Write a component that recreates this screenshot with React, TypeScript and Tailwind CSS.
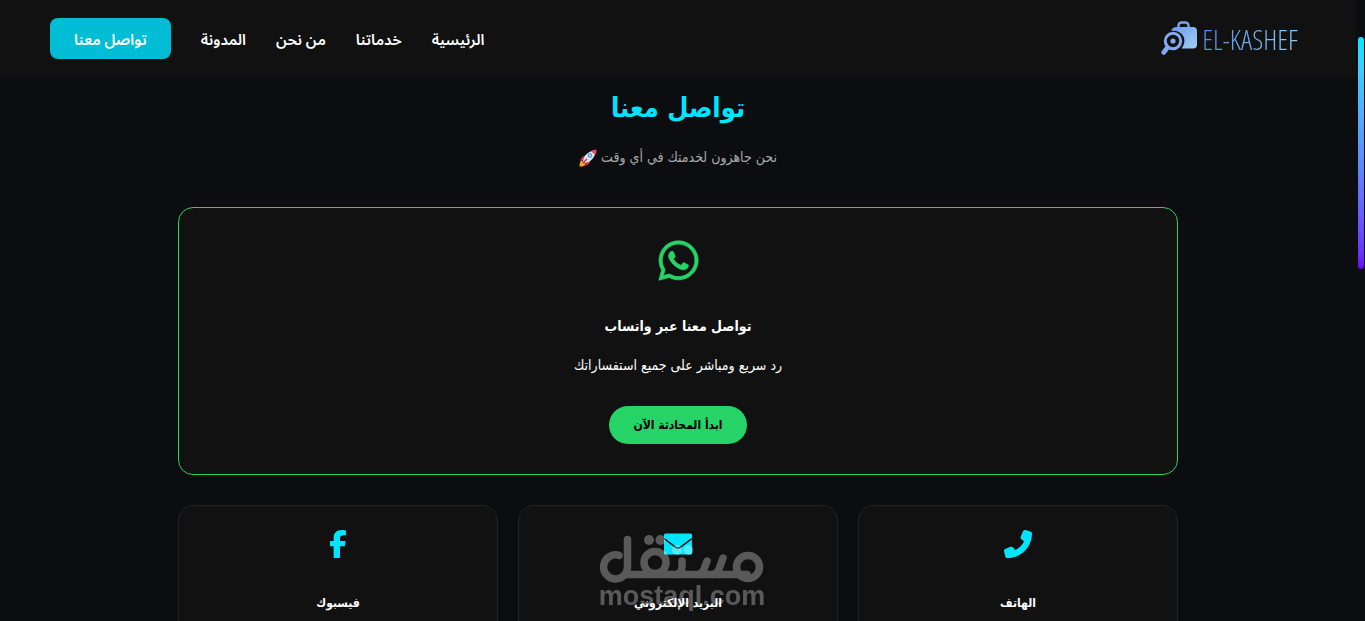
import React from "react";
import { FaWhatsapp } from "react-icons/fa";
import { FaFacebookF, FaPhone } from "react-icons/fa6";

const navLinks = ["الرئيسية", "خدماتنا", "من نحن", "المدونة"];

function Envelope() {
  return (
    <svg width="28" height="28" viewBox="0 0 28 28" fill="none" aria-hidden="true">
      <rect y="3.500" width="28" height="21" rx="1.500" fill="currentColor" />
      <path d="m0 8.500 11.500 8.600a4 4 0 0 0 5 0L28 8.500" stroke="#111111" strokeWidth="1.500" />
    </svg>
  );
}

const channels = [
  { title: "الهاتف", icon: <FaPhone size={28} className="-scale-x-100" />, marked: false },
  { title: "البريد الإلكتروني", icon: <Envelope />, marked: true },
  { title: "فيسبوك", icon: <FaFacebookF size={28} />, marked: false },
];

function LogoMark() {
  return (
    <svg width="37" height="35" viewBox="0 0 37 35" fill="none" aria-hidden="true">
      <defs>
        <linearGradient id="bag" x1="10" y1="2" x2="36" y2="28" gradientUnits="userSpaceOnUse">
          <stop stopColor="#6a93e6" />
          <stop offset="1" stopColor="#9fd0f8" />
        </linearGradient>
      </defs>
      <path d="M17.500 7V4.500a3 3 0 0 1 3-3h4a3 3 0 0 1 3 3V7" stroke="#7aa0ea" strokeWidth="2.400" />
      <path d="M10 9.500C11 7 13 6 16 6h16a4 4 0 0 1 4 4v13.500a4 4 0 0 1-4 4H20.500C26 21 24.500 9.500 10 9.500Z" fill="url(#bag)" />
      <circle cx="12" cy="20" r="7.700" stroke="#86a8ee" strokeWidth="3" />
      <circle cx="12" cy="20" r="2.600" fill="#86a8ee" />
      <path d="M6.500 26.500 2.700 31.500" stroke="#86a8ee" strokeWidth="4.600" strokeLinecap="round" />
    </svg>
  );
}

function Rocket() {
  return (
    <svg width="18" height="18" viewBox="0 0 36 36" role="img" aria-label="🚀" className="inline-block align-middle">
      <path d="M1 35c0-7 1-11 5-12l7 7c-1 4-5 5-12 5Z" fill="#f4a21f" />
      <path d="M2 25c2-8 7-13 14-12l7 7c1 7-4 12-12 14l2-7-5-5Z" fill="#c8304f" />
      <path d="M8 24C9 13 20 3 34 2c-1 14-11 25-22 26Z" fill="#dfe3ea" />
      <path d="M24 4c3-1.500 7-2.500 11-3 0 4-1 8-3 11Z" fill="#f0476b" />
      <circle cx="22" cy="13" r="4.500" fill="#4d8fd6" />
      <circle cx="22" cy="13" r="2.500" fill="#a5d4f5" />
      <path d="m8 28 8-8" stroke="#c8304f" strokeWidth="3" />
    </svg>
  );
}

function Watermark() {
  return (
    <div className="pointer-events-none absolute inset-x-0 top-7 flex flex-col items-center pl-2 opacity-30" dir="ltr">
      <svg width="164" height="50" viewBox="0 0 164 50" fill="none" stroke="#fff" strokeWidth="7.500" strokeLinecap="round" strokeLinejoin="round" aria-hidden="true">
        <path d="M19 21.400A12 12 0 1 0 27.500 34V5.500M26 40.500H147" />
        <circle cx="148" cy="33" r="11.500" />
        <circle cx="55" cy="28.500" r="11" />
        <path d="M82 27v5c0 5-2 8-6 8.500M107 27l-3 8c-1 3-3 5-6 5.500M123 24l-4 11c-1 3-3 5-6 5.500" />
        <g fill="#fff" stroke="none">
          <circle cx="49" cy="6" r="5" />
          <circle cx="60.500" cy="6" r="5" />
          <circle cx="77" cy="16" r="5" />
          <circle cx="88.500" cy="16" r="5" />
        </g>
      </svg>
      <span className="font-['Liberation_Sans',sans-serif] text-[27px] leading-6 font-bold text-white">mostaql.com</span>
    </div>
  );
}

export default function App() {
  return (
    <div dir="rtl" className="relative h-screen overflow-hidden bg-[#0b0d11] pr-[9px] font-['DejaVu_Sans_Condensed','DejaVu_Sans',sans-serif] text-white">
      <header className="flex h-[78px] items-center justify-between bg-[#111111] pr-[58px] pb-px pl-[50px]">
        <a href="#home" dir="ltr" className="flex items-center gap-1">
          <LogoMark />
          <span className="bg-linear-to-r from-[#5b8ce6] to-[#8ccbf5] bg-clip-text font-['Noto_Sans_ExtraCondensed_Light','Noto_Sans_ExtraCondensed','Open_Sans_Condensed_Light','Open_Sans_Condensed','DejaVu_Sans_Condensed',sans-serif] text-[28px] leading-8 font-light text-transparent">
            EL-KASHEF
          </span>
        </a>
        <nav className="flex items-center gap-[30px] font-['Noto_Sans_Arabic','DejaVu_Sans',sans-serif] text-[15px] font-semibold">
          {navLinks.map((label) => (
            <a key={label} href="#section" className="pt-[3px]">{label}</a>
          ))}
          <a href="#contact" className="flex h-[41px] items-center rounded-lg bg-[#00bcd4] px-6 pt-[3px]">
            تواصل معنا
          </a>
        </nav>
      </header>

      <main className="mx-auto max-w-[1000px] text-center">
        <h1 className="pt-1.5 text-[27px] leading-[48px] font-bold text-[#00e5ff]">تواصل معنا</h1>
        <p className="mt-[13px] text-sm leading-6 text-[#aaaaaa]">
          نحن جاهزون لخدمتك في أي وقت <Rocket />
        </p>

        <section className="mt-[38px] flex h-[268px] flex-col items-center rounded-[15px] border border-[#25d366] bg-[#111111] pt-[30px]">
          <FaWhatsapp size={45} stroke="currentColor" strokeWidth={8} className="text-[#25d366]" />
          <h2 className="mt-[31px] text-sm leading-6 font-bold">تواصل معنا عبر واتساب</h2>
          <p className="mt-[15px] text-sm leading-6">رد سريع ومباشر على جميع استفساراتك</p>
          <a href="#whatsapp" className="mt-[29px] flex h-[38px] items-center rounded-full bg-[#25d366] px-6 text-xs font-bold text-black">
            ابدأ المحادثة الآن
          </a>
        </section>

        <div className="mt-[30px] grid grid-cols-3 gap-5">
          {channels.map(({ title, icon, marked }) => (
            <section key={title} className="relative flex h-48 flex-col items-center rounded-[15px] border border-[#222222] bg-[#111111] pt-6">
              <div className="text-[#00e5ff]">{icon}</div>
              <h3 className="mt-[33px] text-xs leading-6 font-bold">{title}</h3>
              {marked && <Watermark />}
            </section>
          ))}
        </div>
      </main>

      <div className="absolute top-[37px] right-px h-[232px] w-[6px] rounded-full bg-linear-to-b from-[#00e5ff] to-[#6a00ff]" />
    </div>
  );
}
